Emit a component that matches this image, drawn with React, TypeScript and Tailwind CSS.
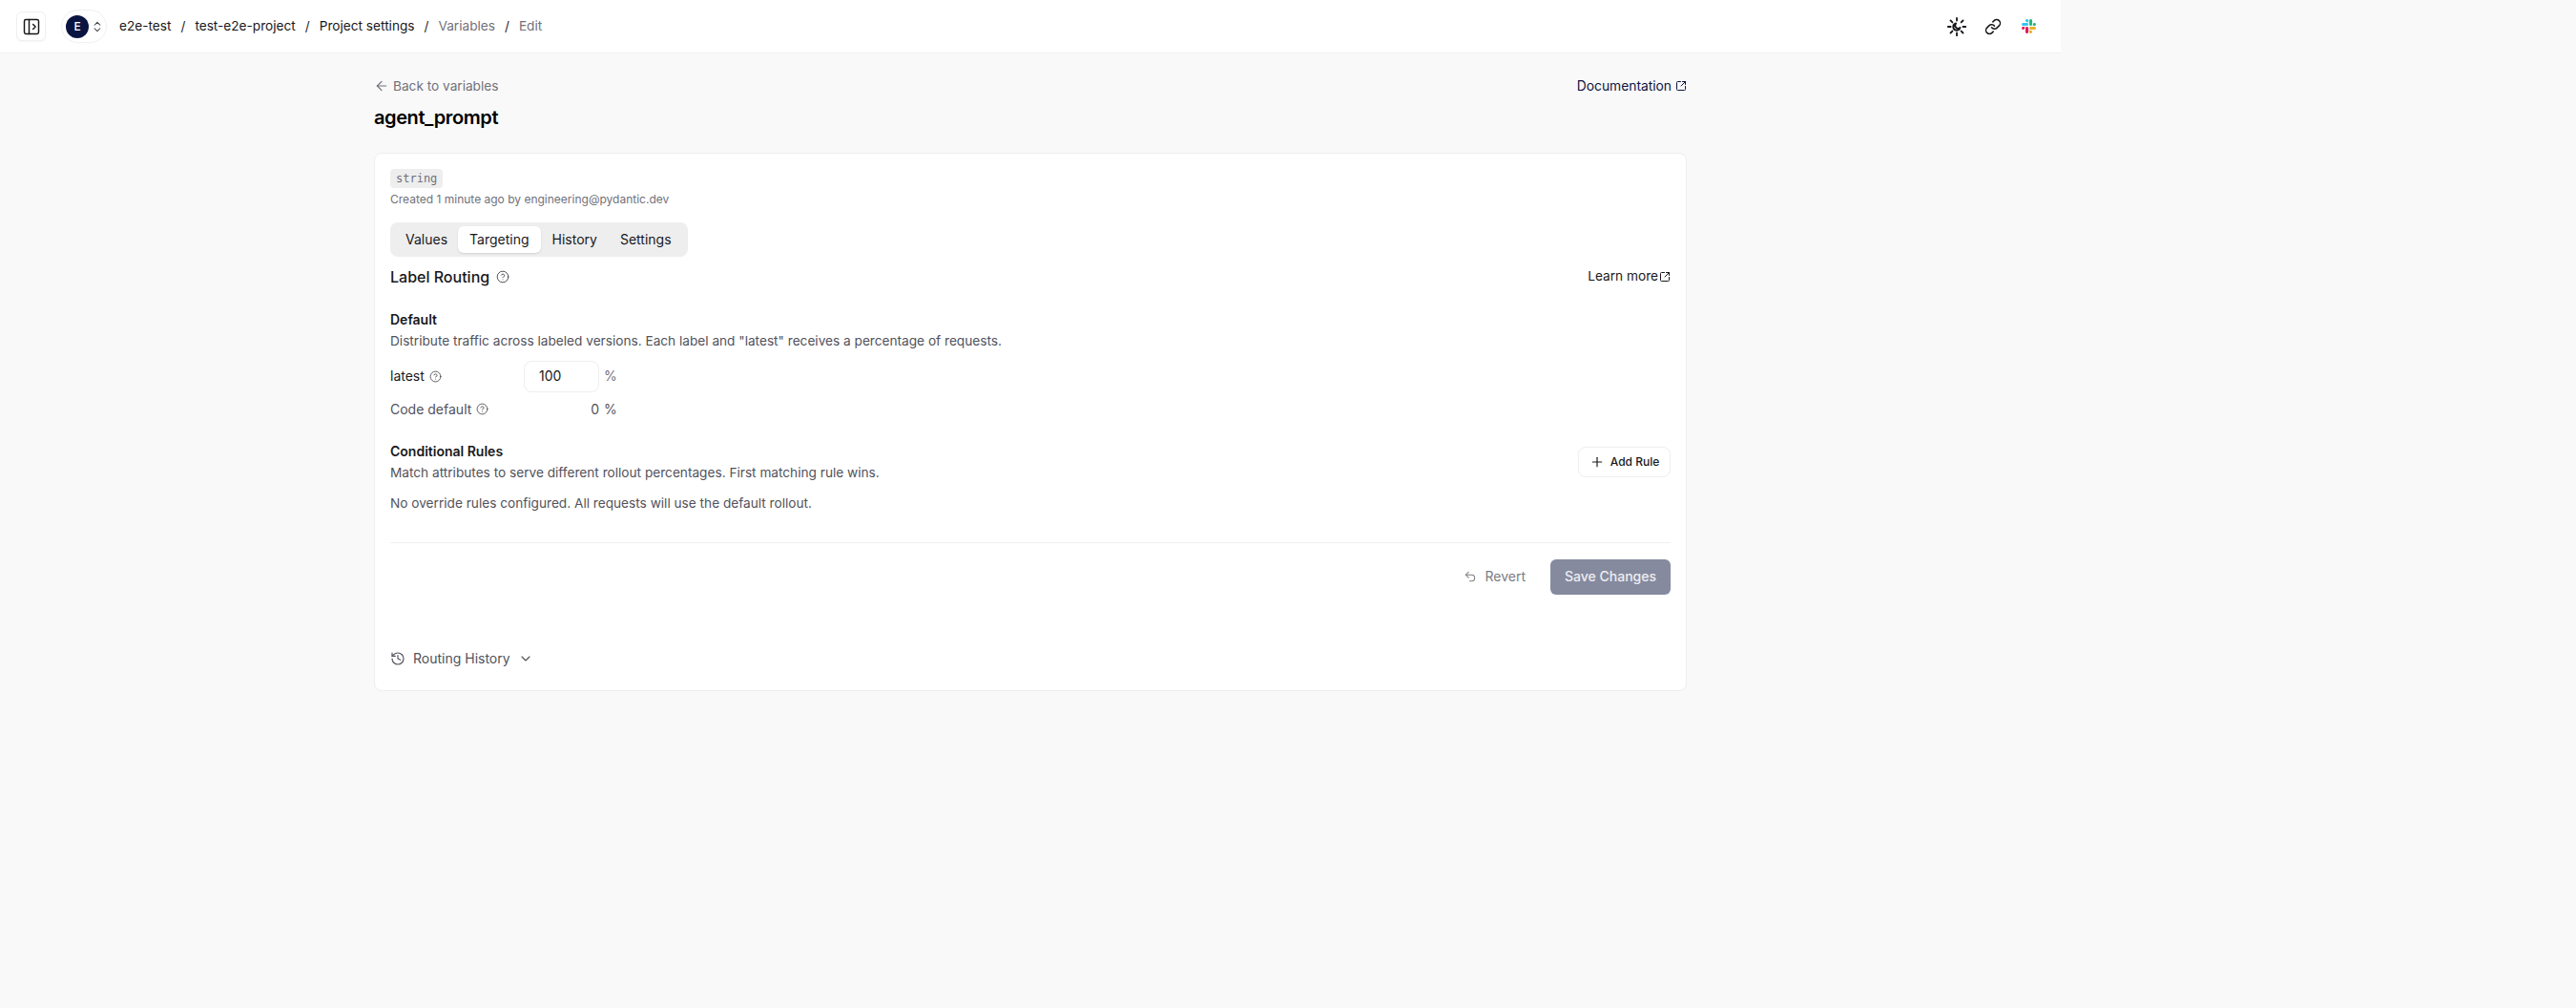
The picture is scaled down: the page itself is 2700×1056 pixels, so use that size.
import { ArrowLeft, ChevronDown, ChevronsUpDown, CircleHelp, History, Link, PanelLeftOpen, Plus, SquareArrowOutUpRight, Undo2 } from 'lucide-react';

function SlackLogo() {
    return (
        <svg width="15" height="15" viewBox="0 0 122.8 122.8">
            <path fill="#e01e5a" d="M25.8 77.6c0 7.1-5.8 12.9-12.9 12.9S0 84.7 0 77.6s5.8-12.9 12.9-12.9h12.9v12.9zm6.5 0c0-7.1 5.8-12.9 12.9-12.9s12.9 5.8 12.9 12.9v32.3c0 7.1-5.8 12.9-12.9 12.9s-12.9-5.8-12.9-12.9V77.6z" />
            <path fill="#36c5f0" d="M45.2 25.8c-7.1 0-12.9-5.8-12.9-12.9S38.1 0 45.2 0s12.9 5.8 12.9 12.9v12.9H45.2zm0 6.5c7.1 0 12.9 5.8 12.9 12.9s-5.8 12.9-12.9 12.9H12.9C5.8 58.1 0 52.3 0 45.2s5.8-12.9 12.9-12.9h32.3z" />
            <path fill="#2eb67d" d="M97 45.2c0-7.1 5.8-12.9 12.9-12.9s12.9 5.8 12.9 12.9-5.8 12.9-12.9 12.9H97V45.2zm-6.5 0c0 7.1-5.8 12.9-12.9 12.9s-12.9-5.8-12.9-12.9V12.9C64.7 5.8 70.5 0 77.6 0s12.9 5.8 12.9 12.9v32.3z" />
            <path fill="#ecb22e" d="M77.6 97c7.1 0 12.9 5.8 12.9 12.9s-5.8 12.9-12.9 12.9-12.9-5.8-12.9-12.9V97h12.9zm0-6.5c-7.1 0-12.9-5.8-12.9-12.9s5.8-12.9 12.9-12.9h32.3c7.1 0 12.9 5.8 12.9 12.9s-5.8 12.9-12.9 12.9H77.6z" />
        </svg>
    );
}

// rays all the way round with a small crescent in the middle
function ThemeIcon() {
    return (
        <svg width="22" height="22" viewBox="0 0 24 24" fill="none" stroke="#18181b" strokeWidth="2" strokeLinecap="round" strokeLinejoin="round">
            <path d="M12 2v3M12 19v3M2 12h3M19 12h3M4.9 4.9 7 7M17 17l2.1 2.1M4.9 19.1 7 17M17 7l2.1-2.1" />
            <path d="M11 8.2a4 4 0 1 0 4.8 4.8 3.4 3.4 0 0 1-4.8-4.8z" />
        </svg>
    );
}

function Crumbs() {
    const sep = <span className="text-[#27272a]">/</span>;
    return (
        <nav className="flex items-center gap-[10px] text-[13.65px] text-[#18181b]">
            <span>e2e-test</span>
            {sep}
            <span>test-e2e-project</span>
            {sep}
            <span>Project settings</span>
            {sep}
            <span className="text-[#71717a]">Variables</span>
            {sep}
            <span className="text-[#71717a]">Edit</span>
        </nav>
    );
}

function Header() {
    return (
        <header className="flex h-[56px] items-center justify-between border-b border-[#f1f1f1] bg-white pl-[17px] pr-[26px]">
            <div className="flex items-center">
                <button className="flex h-[31px] w-[31px] items-center justify-center rounded-md border border-[#f0f0f0] bg-white shadow-[0_1px_2px_rgba(0,0,0,0.04)]">
                    <PanelLeftOpen size={20} strokeWidth={1.75} color="#18181b" />
                </button>
                <button className="ml-[16px] flex h-[35px] w-[48px] items-center rounded-full border border-[#f0f0f0] bg-white pl-[4px]">
                    <span className="flex h-[24px] w-[24px] items-center justify-center rounded-full bg-[#0b1440] text-xs font-medium text-white">E</span>
                    <ChevronsUpDown size={14} strokeWidth={1.75} color="#3f3f46" className="ml-[2px]" />
                </button>
                <div className="ml-[13px]">
                    <Crumbs />
                </div>
            </div>
            <div className="flex items-center gap-[18px]">
                <ThemeIcon />
                <Link size={18} strokeWidth={2} color="#18181b" />
                <div className="ml-[3px]">
                    <SlackLogo />
                </div>
            </div>
        </header>
    );
}

function Help({ size = 14 }: { size?: number }) {
    return <CircleHelp size={size} strokeWidth={1.5} color="#3f3f46" />;
}

function Tabs() {
    return (
        <div className="mt-[14px] flex h-[36px] w-fit items-center rounded-lg bg-[#eeeeee] px-[5px] text-sm text-[#18181b]">
            <span className="px-[11px]">Values</span>
            <span className="flex h-[28px] items-center rounded-md bg-white px-[12px] shadow-[0_1px_2px_rgba(0,0,0,0.12)]">Targeting</span>
            <span className="px-[12px]">History</span>
            <span className="px-[12px]">Settings</span>
        </div>
    );
}

function Targeting() {
    return (
        <>
            <div className="mt-[8px] flex h-[26px] items-center justify-between">
                <div className="flex items-center gap-[7px]">
                    <h2 className="text-base font-medium text-[#18181b]">Label Routing</h2>
                    <Help />
                </div>
                <a className="flex items-center gap-[1px] text-[13.65px] text-[#18181b]">
                    Learn more
                    <SquareArrowOutUpRight size={12} strokeWidth={2} />
                </a>
            </div>

            <h3 className="mt-[22px] text-sm leading-[20px] font-semibold text-[#18181b]">Default</h3>
            <p className="mt-[2px] text-[13.65px] leading-[20px] text-[#52525b]">Distribute traffic across labeled versions. Each label and "latest" receives a percentage of requests.</p>

            <div className="mt-[11px] flex h-[33px] items-center text-sm text-[#18181b]">
                <span className="flex w-[140px] items-center gap-[5px]">latest <Help size={13} /></span>
                <span className="flex h-[33px] w-[79px] items-center rounded-lg border border-[#eeeeee] bg-white pl-[15px]">100</span>
                <span className="ml-[5px] text-[#71717a]">%</span>
            </div>
            <div className="mt-[8px] flex h-[20px] items-center text-sm text-[#52525b]">
                <span className="flex w-[140px] items-center gap-[5px]">Code default <Help size={13} /></span>
                <span className="w-[79px] text-right">0</span>
                <span className="ml-[5px]">%</span>
            </div>

            <div className="mt-[24px] flex items-center justify-between">
                <div>
                    <h3 className="text-sm leading-[20px] font-semibold text-[#18181b]">Conditional Rules</h3>
                    <p className="mt-[2px] text-[13.65px] leading-[20px] text-[#52525b]">Match attributes to serve different rollout percentages. First matching rule wins.</p>
                </div>
                <button className="flex h-[32px] w-[97px] items-center justify-center gap-[6px] rounded-lg border border-[#eeeeee] bg-white text-xs font-medium text-[#18181b]">
                    <Plus size={16} strokeWidth={1.75} />
                    Add Rule
                </button>
            </div>
            <p className="mt-[12px] text-[13.65px] leading-[20px] text-[#52525b]">No override rules configured. All requests will use the default rollout.</p>

            <div className="mt-[31px] flex items-center justify-end gap-[26px] border-t border-[#edf0f4] pt-[17px]">
                <button className="flex items-center gap-[8px] text-sm text-[#7c7c82]">
                    <Undo2 size={14} strokeWidth={1.75} />
                    Revert
                </button>
                <button className="h-[37px] w-[126px] rounded-md bg-[#858a9f] text-sm font-medium text-white/85">Save Changes</button>
            </div>

            <button className="mt-[57px] flex items-center text-sm text-[#52525b]">
                <History size={16} strokeWidth={1.75} />
                <span className="ml-[8px]">Routing History</span>
                <ChevronDown size={16} strokeWidth={1.75} className="ml-[8px]" />
            </button>
        </>
    );
}

export default function App() {
    return (
        <div className="min-h-screen bg-[#f9f9f9] [font-family:Inter,sans-serif]">
            <div className="w-[2160px]">
                <Header />
                <main className="mx-auto w-[1376px] pt-[24px]">
                    <div className="flex items-center justify-between">
                        <a className="flex items-center gap-[4px] text-[13.65px] text-[#71717a]">
                            <ArrowLeft size={16} strokeWidth={1.75} />
                            Back to variables
                        </a>
                        <a className="flex items-center gap-[4px] text-[13.8px] text-[#0b1440]">
                            Documentation
                            <SquareArrowOutUpRight size={12} strokeWidth={2} />
                        </a>
                    </div>
                    <h1 className="mt-[8px] text-xl leading-[28px] font-semibold tracking-[-0.02em] text-black">agent_prompt</h1>

                    <section className="mt-[23px] rounded-lg border border-[#eeeeee] bg-white px-[16px] pt-[16px] pb-[23px]">
                        <span className="block w-fit rounded bg-[#eeeeee] px-[6px] text-xs leading-[20px] text-[#71717a] [font-family:'DejaVu_Sans_Mono',monospace]">string</span>
                        <p className="mt-[2px] text-xs leading-[20px] text-[#71717a]">Created 1 minute ago by engineering@pydantic.dev</p>
                        <Tabs />
                        <Targeting />
                    </section>
                </main>
            </div>
        </div>
    );
}
